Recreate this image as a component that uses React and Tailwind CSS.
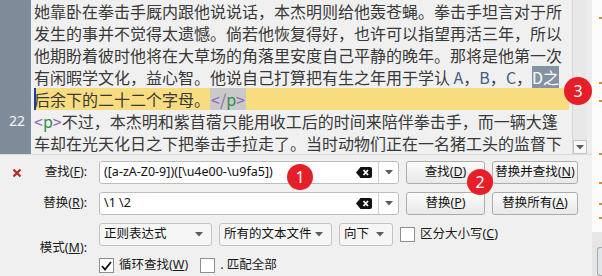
const ui = { fontFamily: '"Noto Sans", "Noto Sans CJK SC", sans-serif' };
const cjk = { fontFamily: '"Noto Sans CJK SC", "Noto Sans", sans-serif' };

function Tag({ close }) {
    return (
        <span>
            <span className="text-[#9466b8]">&lt;</span>
            {close && <span className="text-[#9466b8]">/</span>}
            <span className="text-[#2f8f4e]">p</span>
            <span className="text-[#9466b8]">&gt;</span>
        </span>
    );
}

function Badge({ n, className }) {
    return (
        <div className={"absolute flex items-center justify-center rounded-full bg-[#e61e27] text-white text-[16px] " + className} style={ui}>
            {n}
        </div>
    );
}

function Arrow() {
    return (
        <svg width="8" height="5" viewBox="0 0 8 5">
            <path d="M0 0 H8 L4 4.5 Z" fill="#5c5c5c" />
        </svg>
    );
}

function ClearIcon() {
    return (
        <svg width="16" height="11" viewBox="0 0 16 11">
            <path d="M4.5 0 H14 Q16 0 16 2 V9 Q16 11 14 11 H4.5 L0 5.5 Z" fill="#111" />
            <path d="M7.5 3 L12 8 M12 3 L7.5 8" stroke="#fff" strokeWidth="1.8" />
        </svg>
    );
}

function Combo({ value }) {
    return (
        <div className="flex h-[23px] w-[300px] items-center rounded-[3px] border border-[#bdbdbd] bg-white">
            <span className="flex-1 pl-[4px] text-[12.5px] text-[#111]">{value}</span>
            <span className="mr-[6px] flex"><ClearIcon /></span>
            <span className="flex h-full w-[20px] items-center justify-center border-l border-[#d0d0d0]"><Arrow /></span>
        </div>
    );
}

function Button({ children, w }) {
    return (
        <div className={"flex h-[23px] items-center justify-center rounded-[3px] border border-[#adadad] bg-linear-to-b from-[#fbfbfb] to-[#e9e9e9] text-[#111] " + w}>
            {children}
        </div>
    );
}

function Select({ children, w }) {
    return (
        <div className={"flex h-[23px] items-center justify-between rounded-[3px] border border-[#c3c3c3] bg-[#f6f6f6] pl-[4px] pr-[8px] text-[#111] " + w}>
            <span>{children}</span>
            <Arrow />
        </div>
    );
}

function Check({ checked }) {
    return (
        <span className="flex h-[15px] w-[15px] items-center justify-center border border-[#8e8e8e] bg-white">
            {checked && (
                <svg width="11" height="10" viewBox="0 0 11 10">
                    <path d="M1 5 L4 8.5 L10 1" stroke="#111" strokeWidth="1.8" fill="none" />
                </svg>
            )}
        </span>
    );
}

export default function App() {
    const ticks = [17, 82, 100, 153, 182, 203, 217];

    return (
        <div className="relative flex h-[276px] w-[602px] overflow-hidden bg-[#f0f0f0]">
            <div className="flex w-[592px] flex-col">
                {/* editor */}
                <div className="flex h-[154px]">
                    <div className="flex w-[31px] flex-col bg-[#7e8b98] text-[14px] text-[#f2f5f8]" style={ui}>
                        <div className="h-[109px]"></div>
                        <div className="flex h-[22px] items-center justify-end pr-[6px]">22</div>
                    </div>
                    <div className="flex-1 overflow-hidden bg-[#f0f0f0] pl-[3px] pr-[3px] text-[16px] leading-[22px] text-[#383838]" style={cjk}>
                        <div className="h-[22px] whitespace-nowrap">她靠卧在拳击手厩内跟他说说话，本杰明则给他轰苍蝇。拳击手坦言对于所</div>
                        <div className="h-[22px] whitespace-nowrap">发生的事并不觉得太遗憾。倘若他恢复得好，也许可以指望再活三年，所以</div>
                        <div className="h-[22px] whitespace-nowrap">他期盼着彼时他将在大草场的角落里安度自己平静的晚年。那将是他第一次</div>
                        <div className="h-[22px] whitespace-nowrap">
                            有闲暇学文化，益心智。他说自己打算把有生之年用于学认&nbsp;<span className="text-[#3f5f80]">A</span>，<span className="text-[#3f5f80]">B</span>，<span className="text-[#3f5f80]">C</span>，<span className="inline-block h-[22px] bg-[#8493a3] text-white">D之</span>
                        </div>
                        <div className="flex h-[22px] items-stretch whitespace-nowrap bg-[#f8dc80]">
                            <span className="w-[1.5px] bg-[#1c3f9e]"></span>
                            <span className="-ml-[1.5px]">后余下的二十二个字母。</span>
                            <span className="bg-[#c9c9c9] px-[1px]"><Tag close /></span>
                        </div>
                        <div className="h-[22px] whitespace-nowrap"><Tag />不过，本杰明和紫苜蓿只能用收工后的时间来陪伴拳击手，而一辆大篷</div>
                        <div className="h-[22px] whitespace-nowrap">车却在光天化日之下把拳击手拉走了。当时动物们正在一名猪工头的监督下</div>
                    </div>
                    <div className="flex w-[15px] flex-col border-l border-[#d6d6d6] bg-[#e8e8e8]">
                        <div className="flex-1"></div>
                        <div className="flex h-[14px] items-center justify-center border border-[#c4c4c4] bg-[#f7f7f7]"><Arrow /></div>
                    </div>
                    <div className="w-[5px] bg-[#ececec]"></div>
                </div>

                {/* find / replace panel */}
                <div className="flex flex-1 flex-col gap-[8px] border-t border-[#dadada] pt-[6px] text-[12.5px] text-[#1a1a1a]" style={ui}>
                    <div className="flex items-center">
                        <div className="flex w-[99px] items-center pl-[12px]">
                            <svg width="10" height="10" viewBox="0 0 10 10">
                                <path d="M1.5 1.5 L8.5 8.5 M8.5 1.5 L1.5 8.5" stroke="#b4282a" strokeWidth="2.2" />
                            </svg>
                            <span className="ml-auto mr-[12px]">查找(<u>F</u>):</span>
                        </div>
                        <Combo value={"([a-zA-Z0-9])([\\u4e00-\\u9fa5])"} />
                        <div className="ml-[7px] flex gap-[7px]">
                            <Button w="w-[79px]">查找(<u>D</u>)</Button>
                            <Button w="w-[86px]">替换并查找(<u>N</u>)</Button>
                        </div>
                    </div>
                    <div className="flex items-center">
                        <div className="flex w-[99px] items-center">
                            <span className="ml-auto mr-[12px]">替换(<u>R</u>):</span>
                        </div>
                        <Combo value={"\\1 \\2"} />
                        <div className="ml-[7px] flex gap-[7px]">
                            <Button w="w-[79px]">替换(<u>P</u>)</Button>
                            <Button w="w-[86px]">替换所有(<u>A</u>)</Button>
                        </div>
                    </div>
                    <div className="flex">
                        <div className="flex w-[99px] items-center">
                            <span className="ml-auto mr-[12px]">模式(<u>M</u>):</span>
                        </div>
                        <div className="flex flex-col gap-[12px]">
                            <div className="flex items-center gap-[7px]">
                                <Select w="w-[113px]">正则表达式</Select>
                                <Select w="w-[113px]">所有的文本文件</Select>
                                <Select w="w-[54px]">向下</Select>
                                <span className="flex items-center gap-[5px]">
                                    <Check />
                                    <span>区分大小写(<u>C</u>)</span>
                                </span>
                            </div>
                            <div className="flex h-[15px] items-center">
                                <span className="flex items-center gap-[5px]">
                                    <Check checked />
                                    <span>循环查找(<u>W</u>)</span>
                                </span>
                                <span className="ml-[12px] flex items-center gap-[5px]">
                                    <Check />
                                    <span>. 匹配全部</span>
                                </span>
                            </div>
                        </div>
                    </div>
                </div>
            </div>

            {/* right overview strip */}
            <div className="flex w-[10px] flex-col">
                <div className="relative h-[232px] bg-[#fcfcfc]">
                    {ticks.map((t) => (
                        <span key={t} className="absolute right-0 h-[2px] w-[3px] bg-[#e0892f]" style={{ top: t }}></span>
                    ))}
                </div>
                <div className="flex-1 bg-[#e6e6e6] pl-[5px] pt-[15px]">
                    <div className="h-full rounded-l-[3px] border border-r-0 border-[#a9a9a9] bg-[#dfe6ec]"></div>
                </div>
            </div>

            <Badge n="1" className="left-[287px] top-[164px] h-[26px] w-[26px]" />
            <Badge n="2" className="left-[467px] top-[169px] h-[26px] w-[26px]" />
            <Badge n="3" className="left-[564px] top-[77px] h-[28px] w-[28px]" />
        </div>
    );
}
